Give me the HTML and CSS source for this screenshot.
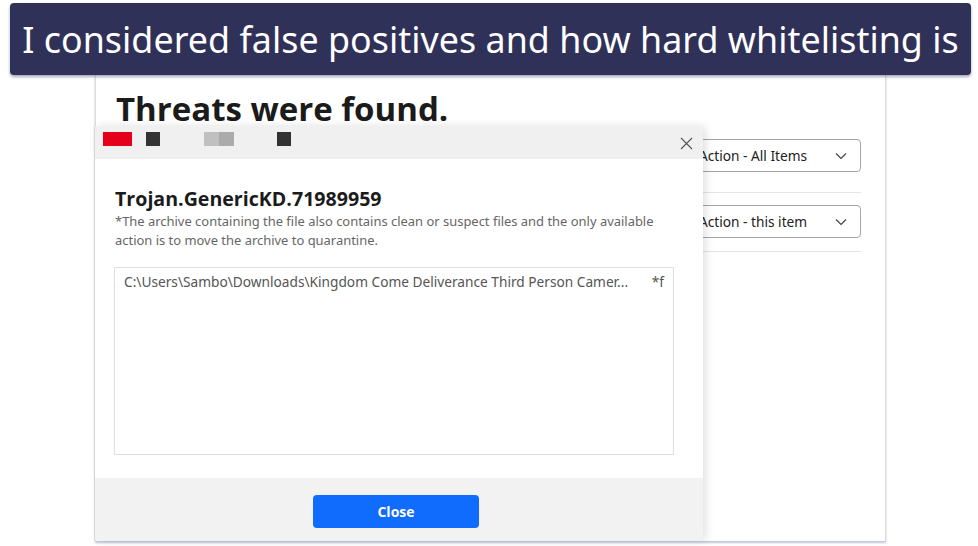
FILE: index.html
```html
<!DOCTYPE html>
<html lang="en">
<head>
    <meta charset="UTF-8">
    <meta name="viewport" content="width=device-width, initial-scale=1.0">
    <title>Threats were found</title>
    <link rel="stylesheet" href="styles.css">
</head>
<body>
    <div class="banner">I considered false positives and how hard whitelisting is</div>

    <div class="stage">
        <h1 class="heading">Threats were found.</h1>

        <div class="actions">
            <div class="action-row">
                <div class="select">
                    <span>Action - All Items</span>
                    <svg class="chevron" width="12" height="8" viewBox="0 0 12 8"><path d="M1 1.5 6 6.5 11 1.5" fill="none" stroke="#444" stroke-width="1.2"/></svg>
                </div>
            </div>
            <div class="action-row">
                <div class="select">
                    <span>Action - this item</span>
                    <svg class="chevron" width="12" height="8" viewBox="0 0 12 8"><path d="M1 1.5 6 6.5 11 1.5" fill="none" stroke="#444" stroke-width="1.2"/></svg>
                </div>
            </div>
        </div>

        <div class="dialog">
            <div class="dialog-head">
                <div class="redacted">
                    <span class="blk red"></span>
                    <span class="blk dark"></span>
                    <span class="blk grey"></span>
                    <span class="blk dark last"></span>
                </div>
                <svg class="close-x" width="13" height="13" viewBox="0 0 13 13"><path d="M1 1 12 12M12 1 1 12" stroke="#555" stroke-width="1.1"/></svg>
            </div>

            <div class="dialog-body">
                <h2 class="threat">Trojan.GenericKD.71989959</h2>
                <p class="note">*The archive containing the file also contains clean or suspect files and the only available action is to move the archive to quarantine.</p>

                <div class="files">
                    <div class="file-row">
                        <span class="path">C:\Users\Sambo\Downloads\Kingdom Come Deliverance Third Person Camer...</span>
                        <span class="flag">*f</span>
                    </div>
                </div>
            </div>

            <div class="dialog-foot">
                <button class="btn-close">Close</button>
            </div>
        </div>
    </div>
</body>
</html>
```

FILE: styles.css
```css
body {
    margin: 0;
    background-color: #fff;
    font-family: "Open Sans", "Noto Sans", sans-serif;
    width: 978px;
    height: 546px;
    overflow: hidden;
}

.banner {
    position: relative;
    z-index: 2;
    margin: 3px 7px 0 10px;
    height: 72px;
    background-color: #303158;
    border-radius: 4px;
    box-shadow: 0 2px 3px rgba(60, 60, 110, 0.45);
    color: #fff;
    font-family: "Noto Sans", sans-serif;
    font-size: 35.8px;
    line-height: 72px;
    text-align: center;
    letter-spacing: 0.05px;
}

.stage {
    position: relative;
    margin-left: 95px;
    width: 789px;
    height: 466px;
    border-left: 1px solid #dcdcdc;
    border-right: 1px solid #dcdcdc;
    box-shadow: 0 2px 2px rgba(120, 125, 170, 0.45);
    background-color: #fff;
    display: flex;
    flex-direction: column;
}

.heading {
    margin: 12px 0 0 20px;
    font-size: 33px;
    font-weight: 700;
    color: #1b1b1b;
    line-height: 44px;
}

.actions {
    align-self: flex-end;
    width: 300px;
    margin: 8px 24px 0 0;
}

.action-row {
    padding: 12px 0 13px;
    border-bottom: 1px solid #e6e6e6;
}

.action-row:first-child {
    padding: 0 0 20px;
}

.select {
    margin-left: 126px;
    height: 31px;
    border: 1px solid #a6a6a6;
    border-radius: 4px;
    display: flex;
    align-items: center;
    justify-content: space-between;
    padding: 0 13px 0 11px;
    font-family: "Noto Sans", sans-serif;
    font-size: 13.7px;
    color: #222;
}

.dialog {
    position: absolute;
    left: -1px;
    top: 51px;
    width: 608px;
    height: 414px;
    background-color: #fff;
    border-radius: 0 5px 0 0;
    box-shadow: 3px 0 8px rgba(0, 0, 0, 0.12), -1px 0 0 #dcdcdc;
    display: flex;
    flex-direction: column;
}

.dialog-head {
    height: 33px;
    background-color: #f0f0f0;
    border-radius: 0 5px 0 0;
    display: flex;
    justify-content: space-between;
    align-items: flex-start;
}

.redacted {
    display: flex;
    margin: 6px 0 0 8px;
}

.blk {
    height: 14px;
    width: 14px;
}

.blk.red {
    width: 29px;
    background-color: #e5001c;
}

.blk.dark {
    margin-left: 14px;
    background-color: #333;
}

.blk.grey {
    width: 30px;
    margin-left: 44px;
    background: linear-gradient(to right, #c0c0c0 50%, #ababab 50%);
}

.blk.last {
    margin-left: 43px;
}

.close-x {
    margin: 11px 10px 0 0;
}

.dialog-body {
    flex: 1;
    padding: 27px 29px 0 19px;
}

.threat {
    margin: 0 0 0 1px;
    font-size: 19.6px;
    font-weight: 700;
    color: #1b1b1b;
    line-height: 26px;
}

.note {
    margin: 0 0 0 1px;
    font-family: "Noto Sans", sans-serif;
    font-size: 12.95px;
    line-height: 19px;
    color: #666;
}

.files {
    margin-top: 17px;
    height: 186px;
    border: 1px solid #dedede;
}

.file-row {
    display: flex;
    justify-content: space-between;
    padding: 4px 9px 0 9px;
    font-family: "Noto Sans", sans-serif;
    font-size: 13.7px;
    color: #555;
}

.dialog-foot {
    height: 62px;
    background-color: #f2f2f2;
    display: flex;
    justify-content: center;
    align-items: flex-start;
}

.btn-close {
    margin: 17px 6px 0 0;
    width: 166px;
    height: 33px;
    border: none;
    border-radius: 4px;
    background-color: #0f6cfd;
    color: #fff;
    font-family: "Open Sans", sans-serif;
    font-size: 14px;
    font-weight: 700;
}
```
